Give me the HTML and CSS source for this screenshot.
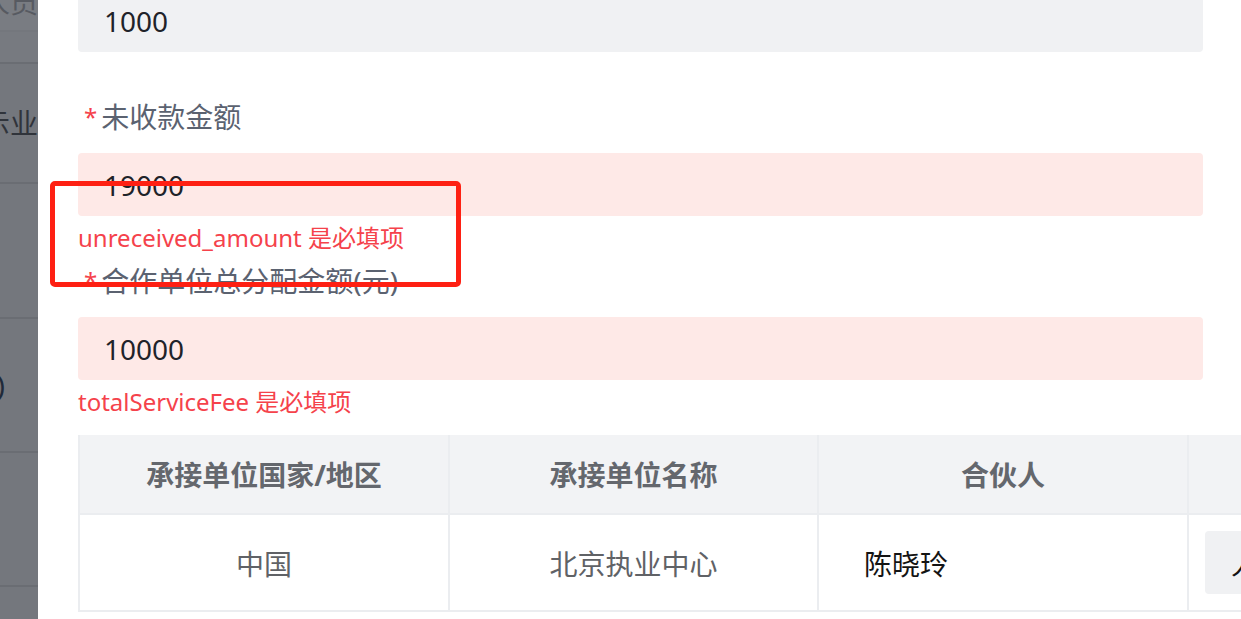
FILE: index.html
```html
<!DOCTYPE html>
<html lang="zh-CN">
<head>
<meta charset="utf-8">
<title>表单</title>
<link rel="stylesheet" href="styles.css">
</head>
<body>
<div class="page">
  <aside class="backdrop">
    <div class="bd-row bd-row--head"><span class="bd-head-text">人员</span></div>
    <div class="bd-row bd-row--sub"></div>
    <div class="bd-row bd-row--a"><span>示业</span></div>
    <div class="bd-row bd-row--b"></div>
    <div class="bd-row bd-row--c"><span class="bd-paren">(1)</span></div>
    <div class="bd-row bd-row--d"></div>
    <div class="bd-row bd-row--e"></div>
  </aside>

  <main class="drawer">
    <div class="form">
      <div class="field">
        <div class="input input--disabled">1000</div>
        <div class="tip"></div>
      </div>
      <div class="field">
        <div class="label"><span class="req">*</span>未收款金额</div>
        <div class="input input--error">19000</div>
        <div class="tip">unreceived_amount 是必填项</div>
      </div>
      <div class="field">
        <div class="label"><span class="req">*</span>合作单位总分配金额(元)</div>
        <div class="input input--error">10000</div>
        <div class="tip">totalServiceFee 是必填项</div>
      </div>
    </div>

    <div class="table">
      <div class="th">承接单位国家/地区</div>
      <div class="th">承接单位名称</div>
      <div class="th">合伙人</div>
      <div class="th"></div>

      <div class="td td--center">中国</div>
      <div class="td td--center">北京执业中心</div>
      <div class="td"><div class="cell-input">陈晓玲</div></div>
      <div class="td"><div class="cell-input cell-input--filled">人民币</div></div>
    </div>
  </main>

  <div class="annot"></div>
</div>
</body>
</html>
```

FILE: styles.css
```css
html, body {
  margin: 0;
  padding: 0;
  background: #ffffff;
}

body {
  font-family: "Noto Sans", "Noto Sans CJK SC", sans-serif;
}

.page {
  position: relative;
  display: flex;
  width: 1241px;
  height: 619px;
  overflow: hidden;
}

/* dimmed page behind the drawer */
.backdrop {
  flex: none;
  width: 38px;
  background: #74777d;
  display: flex;
  flex-direction: column;
  overflow: hidden;
}

.bd-row {
  flex: none;
  box-sizing: border-box;
  border-bottom: 2px solid #6a6d73;
  display: flex;
  align-items: center;
  justify-content: flex-end;
  white-space: nowrap;
  font-size: 28px;
  line-height: 28px;
  color: #30343b;
  overflow: hidden;
}

.bd-row--head {
  height: 32px;
  align-items: flex-start;
  background: #797c82;
  border-bottom-color: #74777d;
}

.bd-head-text {
  margin-top: -12px;
  color: #575a61;
}

.bd-row--sub {
  height: 32px;
  background: #777a80;
}

.bd-row--a { height: 120px; }
.bd-row--b { height: 135px; }
.bd-row--c { height: 134px; }
.bd-row--d { height: 134px; }
.bd-row--e { flex: 1; border-bottom: none; }

.bd-paren {
  padding-right: 33px;
  color: #1f2a3a;
}

/* drawer */
.drawer {
  flex: 1;
  min-width: 0;
  background: #ffffff;
  padding: 0 38px 0 40px;
  overflow: hidden;
}

.form {
  margin-top: -11px;
  display: flex;
  flex-direction: column;
}

.field {
  display: flex;
  flex-direction: column;
}

.label {
  height: 67px;
  box-sizing: border-box;
  padding-bottom: 6px;
  display: flex;
  align-items: center;
  font-size: 28px;
  line-height: 32px;
  color: #5b6270;
}

.req {
  color: #f5424b;
  font-size: 24px;
  margin: 0 4px 0 6px;
}

.input {
  height: 63px;
  box-sizing: border-box;
  border-radius: 4px;
  padding: 0 26px;
  display: flex;
  align-items: center;
  font-size: 28px;
  color: #1f2329;
}

.input--disabled {
  background: #f0f1f3;
}

.input--error {
  background: #fee9e7;
}

.tip {
  height: 24px;
  margin-top: 10px;
  font-size: 24px;
  line-height: 24px;
  color: #f5424b;
  white-space: nowrap;
}

/* table */
.table {
  margin-top: 21px;
  display: grid;
  grid-template-columns: 370px 369px 370px 370px;
  width: max-content;
  border-left: 2px solid #ebedf0;
}

.th {
  height: 80px;
  box-sizing: border-box;
  background: #f2f3f5;
  border-right: 2px solid #ebedf0;
  border-bottom: 2px solid #ebedf0;
  display: flex;
  align-items: center;
  justify-content: center;
  font-size: 28px;
  font-weight: 700;
  color: #64676d;
}

.td {
  height: 97px;
  box-sizing: border-box;
  border-right: 2px solid #ebedf0;
  border-bottom: 2px solid #ebedf0;
  padding: 16px;
  display: flex;
  align-items: center;
  font-size: 28px;
  color: #606266;
}

.td--center {
  justify-content: center;
}

.cell-input {
  flex: 1;
  height: 63px;
  box-sizing: border-box;
  border-radius: 4px;
  padding: 0 29px;
  display: flex;
  align-items: center;
  color: #141414;
  white-space: nowrap;
}

.cell-input--filled {
  background: #f0f1f3;
  padding: 0 26px;
}

/* red annotation box drawn over the screenshot */
.annot {
  position: absolute;
  left: 50px;
  top: 181px;
  width: 411px;
  height: 106px;
  box-sizing: border-box;
  border: 5px solid #fe2013;
  border-radius: 5px;
  pointer-events: none;
}
```
